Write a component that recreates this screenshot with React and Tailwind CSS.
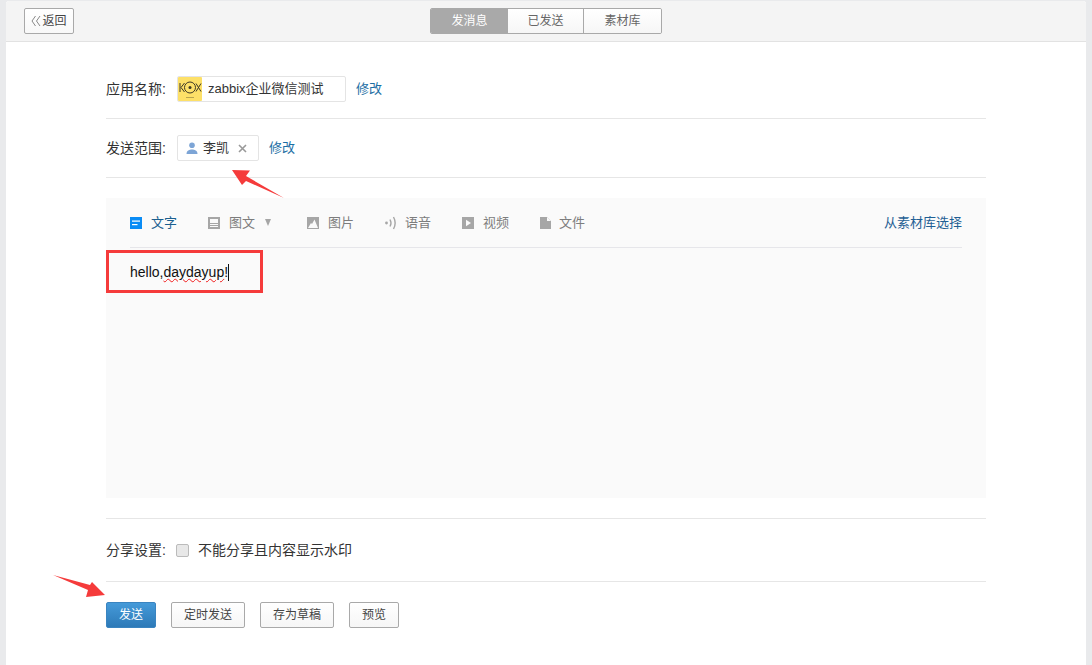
const TOOLS = [
  { label: '文字', active: true },
  { label: '图文', caret: true },
  { label: '图片' },
  { label: '语音', tight: true },
  { label: '视频' },
  { label: '文件', tight: true },
];

function ToolIcon({ name }) {
  if (name === '文字') {
    return (
      <svg width="12" height="12" viewBox="0 0 12 12">
        <rect width="12" height="12" fill="#0a8cf5" />
        <rect x="2" y="3.5" width="8" height="1.2" fill="#fff" />
        <rect x="2" y="7" width="5.5" height="1.2" fill="#fff" />
      </svg>
    );
  }
  if (name === '图文') {
    return (
      <svg width="12" height="12" viewBox="0 0 12 12">
        <rect width="12" height="12" fill="#a6a6a6" />
        <rect x="2" y="2" width="8" height="4" fill="#fafafa" />
        <rect x="2" y="7" width="8" height="1" fill="#fafafa" />
        <rect x="2" y="9" width="8" height="1" fill="#fafafa" />
      </svg>
    );
  }
  if (name === '图片') {
    return (
      <svg width="12" height="12" viewBox="0 0 12 12">
        <rect width="12" height="12" fill="#a6a6a6" />
        <path d="M1 11 L4 6 L5 7 L7.5 2.5 L11 11 Z" fill="#fafafa" />
      </svg>
    );
  }
  if (name === '语音') {
    return (
      <svg width="12" height="14" viewBox="0 0 12 14" fill="none" stroke="#a6a6a6" strokeWidth="1.4">
        <circle cx="1.5" cy="7" r="1.4" fill="#a6a6a6" stroke="none" />
        <path d="M5 3.5 Q7 7 5 10.5" />
        <path d="M8.5 1 Q11.8 7 8.5 13" />
      </svg>
    );
  }
  if (name === '视频') {
    return (
      <svg width="12" height="12" viewBox="0 0 12 12">
        <rect width="12" height="12" fill="#a6a6a6" />
        <path d="M4 2.8 L9 6 L4 9.2 Z" fill="#fafafa" />
      </svg>
    );
  }
  return (
    <svg width="11" height="12" viewBox="0 0 11 12">
      <path d="M0 0 H7 L11 4 V12 H0 Z" fill="#a6a6a6" />
      <path d="M7 0 V4 H11 Z" fill="#fafafa" />
    </svg>
  );
}

function Logo() {
  return (
    <svg width="24" height="24" viewBox="0 0 24 24" className="shrink-0">
      <rect width="24" height="24" rx="1" fill="#fde068" />
      <g fill="none" stroke="#3d3826" strokeWidth="1">
        <path d="M2 6 V15 M6.5 6 L3 10.5 L6.5 15" />
        <circle cx="12" cy="10.5" r="5.5" />
        <path d="M18 6.5 L23 14.5 M23 6.5 L18 14.5" />
      </g>
      <circle cx="12" cy="10.5" r="1.5" fill="#3d3826" />
      <rect x="8" y="20" width="8" height="1" fill="#b9a44e" />
    </svg>
  );
}

function Btn({ children, w }) {
  return (
    <button className={`h-[26px] ${w} rounded-[2px] border border-[#a9a9a9] bg-gradient-to-b from-white to-[#f6f6f6] text-xs text-[#444]`}>
      {children}
    </button>
  );
}

export default function App() {
  return (
    <div className="relative h-[665px] w-[1092px] overflow-hidden bg-[#e9eaec] pt-px pl-[6px] font-['Liberation_Sans','Noto_Sans_CJK_SC',sans-serif] text-[13px] text-[#333]">
      <div className="h-[664px] w-[1080px] rounded-t-[3px] bg-white">
        {/* top bar */}
        <div className="flex h-[41px] items-center rounded-t-[3px] border-b border-[#e2e2e2] bg-[#f4f4f4] px-[18px]">
          <div className="flex-1">
            <button className="flex h-[26px] w-[50px] items-center justify-center rounded-[2px] border border-[#a9a9a9] bg-gradient-to-b from-white to-[#f8f8f8] text-xs text-[#444]">
              <svg width="10" height="12" viewBox="0 0 10 12" fill="none" stroke="#888" strokeWidth="1" className="mr-px">
                <path d="M4.5 1 L1 6 L4.5 11 M9 1 L5.5 6 L9 11" />
              </svg>
              返回
            </button>
          </div>
          <div className="flex h-[26px] w-[232px] overflow-hidden rounded-[2px] border border-[#a9a9a9] text-xs">
            <div className="flex w-[77px] items-center justify-center bg-[#a9a9a9] text-white">发消息</div>
            <div className="flex w-[76px] items-center justify-center border-r border-[#a9a9a9] bg-gradient-to-b from-white to-[#f6f6f6] text-[#666]">已发送</div>
            <div className="flex flex-1 items-center justify-center bg-gradient-to-b from-white to-[#f6f6f6] text-[#666]">素材库</div>
          </div>
          <div className="flex-1" />
        </div>

        <div className="px-[100px]">
          {/* app name */}
          <div className="flex items-center border-b border-[#e6e6e6] pt-[34px] pb-4">
            <span className="w-[71px] text-sm">应用名称:</span>
            <div className="flex h-[26px] w-[169px] items-center rounded-[2px] border border-[#e4e4e4] bg-white">
              <Logo />
              <span className="ml-[6px]">zabbix企业微信测试</span>
            </div>
            <a className="ml-[10px] text-[#1c6ea4]">修改</a>
          </div>

          {/* recipients */}
          <div className="flex items-center border-b border-[#e6e6e6] py-4">
            <span className="w-[71px] text-sm">发送范围:</span>
            <div className="flex h-[26px] w-[82px] items-center rounded-[2px] border border-[#e4e4e4] bg-white pl-2">
              <svg width="12" height="12" viewBox="0 0 12 12" fill="#7da5d6">
                <circle cx="6" cy="3.2" r="2.8" />
                <path d="M0.5 12 C0.5 8.5 3.5 7.5 6 7.5 C8.5 7.5 11.5 8.5 11.5 12 Z" />
              </svg>
              <span className="ml-[5px]">李凯</span>
              <svg width="9" height="9" viewBox="0 0 9 9" stroke="#999" strokeWidth="1.6" className="ml-[9px]">
                <path d="M1 1 L8 8 M8 1 L1 8" />
              </svg>
            </div>
            <a className="ml-[10px] text-[#1c6ea4]">修改</a>
          </div>

          {/* editor */}
          <div className="mt-5 h-[300px] bg-[#fafafa] px-6">
            <div className="flex h-[50px] items-center justify-between border-b border-[#e6e6ea]">
              <div className="flex items-center gap-[31px]">
                {TOOLS.map((t) => (
                  <div key={t.label} className="flex items-center">
                    <ToolIcon name={t.label} />
                    <span className={`${t.tight ? 'ml-2' : 'ml-[9px]'} ${t.active ? 'text-[#1a5f8f]' : 'text-[#7d7d7d]'}`}>{t.label}</span>
                    {t.caret && <span className="mr-[5px] ml-[10px] h-0 w-0 border-x-[3.5px] border-t-[7px] border-x-transparent border-t-[#a6a6a6]" />}
                  </div>
                ))}
              </div>
              <a className="text-[#1f5f94]">从素材库选择</a>
            </div>
            <div className="mt-[14px] flex h-[20px] items-center text-sm text-[#111]">
              hello,<span className="underline decoration-[#f01c1c] decoration-wavy decoration-1">daydayup</span>!
              <span className="h-[17px] w-px bg-[#111]" />
            </div>
          </div>

          {/* share */}
          <div className="mt-5 flex h-[64px] items-center border-y border-[#e6e6e6]">
            <span className="w-[70px] text-sm">分享设置:</span>
            <span className="h-[13px] w-[13px] rounded-[2px] border border-[#bbb] bg-[#e8e8e8]" />
            <span className="ml-[9px] text-sm">不能分享且内容显示水印</span>
          </div>

          {/* actions */}
          <div className="mt-5 flex gap-[15px]">
            <button className="h-[26px] w-[50px] rounded-[2px] border border-[#3a84c0] bg-gradient-to-b from-[#459ad9] to-[#2d7ab8] text-xs text-white">发送</button>
            <Btn w="w-[74px]">定时发送</Btn>
            <Btn w="w-[74px]">存为草稿</Btn>
            <Btn w="w-[50px]">预览</Btn>
          </div>
        </div>
      </div>

      {/* screenshot annotations */}
      <div className="absolute top-[250px] left-[106px] h-[43px] w-[157px] border-[3px] border-[#f53b3b]" />
      <svg width="1092" height="665" className="pointer-events-none absolute top-0 left-0">
        <polygon points="232,170 250,170.5 246,176 284,198 246,181 242,185" fill="#f53b3b" />
        <polygon points="53,575 90,585 92,582 105,595 86,597 88,590" fill="#f53b3b" />
      </svg>
    </div>
  );
}
